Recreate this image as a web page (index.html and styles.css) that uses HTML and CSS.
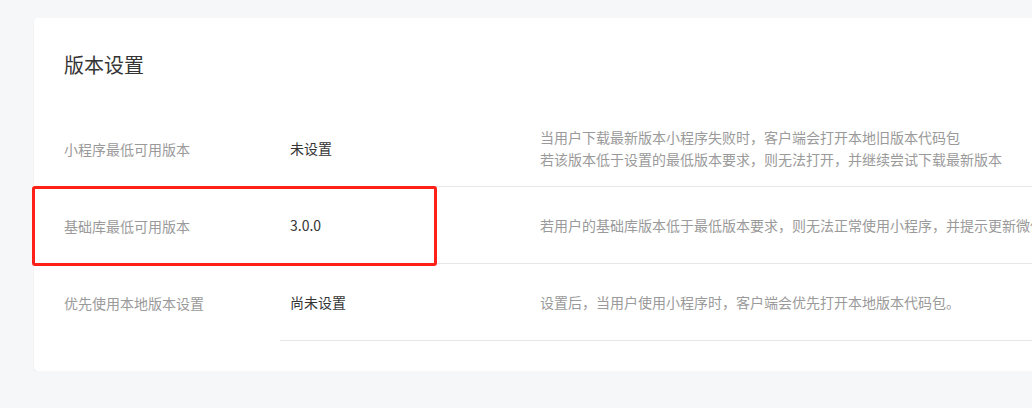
FILE: index.html
```html
<!DOCTYPE html>
<html lang="zh-CN">
<head>
<meta charset="utf-8">
<title>版本设置</title>
<link rel="stylesheet" href="styles.css">
</head>
<body>
<div class="page">
  <section class="card">
    <h2 class="card-title">版本设置</h2>
    <div class="setting-list">
      <div class="setting-row">
        <div class="setting-label">小程序最低可用版本</div>
        <div class="setting-body">
          <div class="setting-value">未设置</div>
          <div class="setting-desc">
            <p>当用户下载最新版本小程序失败时，客户端会打开本地旧版本代码包</p>
            <p>若该版本低于设置的最低版本要求，则无法打开，并继续尝试下载最新版本</p>
          </div>
        </div>
      </div>
      <div class="setting-row highlighted">
        <div class="setting-label">基础库最低可用版本</div>
        <div class="setting-body">
          <div class="setting-value">3.0.0</div>
          <div class="setting-desc">
            <p>若用户的基础库版本低于最低版本要求，则无法正常使用小程序，并提示更新微信</p>
          </div>
        </div>
        <div class="highlight-box"></div>
      </div>
      <div class="setting-row">
        <div class="setting-label">优先使用本地版本设置</div>
        <div class="setting-body">
          <div class="setting-value">尚未设置</div>
          <div class="setting-desc">
            <p>设置后，当用户使用小程序时，客户端会优先打开本地版本代码包。</p>
          </div>
        </div>
      </div>
    </div>
  </section>
</div>
</body>
</html>
```

FILE: styles.css
```css
html, body {
  margin: 0;
  padding: 0;
  overflow: hidden;
  background: #f6f7f9;
}

body {
  font-family: "Noto Sans CJK SC", "Liberation Sans", sans-serif;
  color: #353535;
}

.page {
  padding: 18px 0 0 34px;
  width: 1400px;
}

.card {
  background: #fff;
  border-radius: 4px;
  box-shadow: 0 1px 2px rgba(0, 0, 0, 0.07);
  padding: 33px 30px 30px 30px;
}

.card-title {
  margin: 0 0 31px 0;
  font-size: 20px;
  line-height: 28px;
  font-weight: 400;
  color: #353535;
}

.setting-row {
  display: flex;
  position: relative;
}

.setting-label {
  width: 216px;
  flex: none;
  display: flex;
  align-items: center;
  font-size: 14px;
  line-height: 22px;
  color: #9a9a9a;
}

.setting-body {
  flex: 1;
  display: flex;
  align-items: center;
  height: 76px;
  border-bottom: 1px solid #e7e7eb;
}

.setting-value {
  width: 240px;
  flex: none;
  padding-left: 10px;
  font-size: 14px;
  line-height: 22px;
  color: #353535;
}

.setting-desc {
  padding-left: 10px;
  font-size: 14px;
  line-height: 22px;
  color: #9a9a9a;
  white-space: nowrap;
}

.setting-desc p {
  margin: 0;
}

.highlight-box {
  position: absolute;
  left: -32px;
  top: -1px;
  width: 405px;
  height: 80px;
  box-sizing: border-box;
  border: 3px solid #ff2117;
  border-radius: 3px;
  pointer-events: none;
}
```
